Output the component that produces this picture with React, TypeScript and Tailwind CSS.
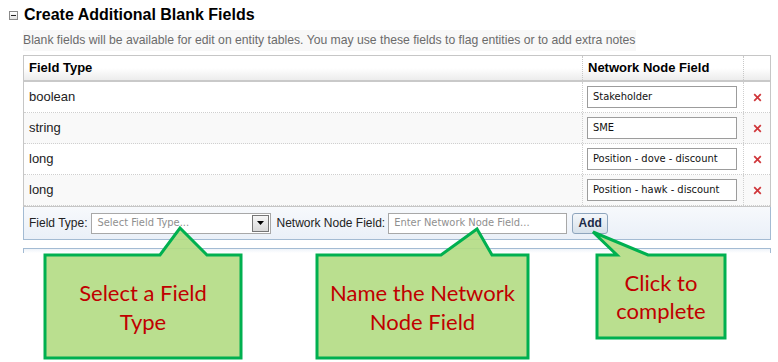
const rows = [
  { type: 'boolean', name: 'Stakeholder' },
  { type: 'string', name: 'SME' },
  { type: 'long', name: 'Position - dove - discount' },
  { type: 'long', name: 'Position - hawk - discount' },
]

const tahoma = "font-['DejaVu_Sans_Condensed','DejaVu_Sans',sans-serif]"

function RemoveIcon() {
  return (
    <svg width="9" height="9" viewBox="0 0 9 9">
      <path d="M1.2 1.2L7.8 7.8M7.8 1.2L1.2 7.8" stroke="#d0363a" strokeWidth="1.7" />
    </svg>
  )
}

function CollapseIcon() {
  return (
    <span className="flex h-[9px] w-[9px] items-center justify-center border border-[#8a8a8a] bg-gradient-to-b from-white to-[#e2e2e2]">
      <span className="h-[1px] w-[5px] bg-[#222]" />
    </span>
  )
}

const callouts = [
  { left: 46, top: 256, w: 194, h: 101, lines: ['Select a Field', 'Type'], lh: 'leading-[29px]' },
  { left: 318, top: 256, w: 209, h: 101, lines: ['Name the Network', 'Node Field'], lh: 'leading-[29px]' },
  { left: 598, top: 256, w: 126, h: 81, lines: ['Click to', 'complete'], lh: 'leading-[28px]' },
]

export default function App() {
  return (
    <div className="relative h-[362px] w-[778px] overflow-hidden bg-white font-['Liberation_Sans',Arial,sans-serif]">
      {/* section title */}
      <div className="flex items-center gap-[6px] pl-[9px] pt-[6px]">
        <CollapseIcon />
        <h2 className="text-[16px] font-bold leading-[18px] text-black">Create Additional Blank Fields</h2>
      </div>

      <div className="ml-[23px] w-[748px]">
        <p className="mt-[6px] inline-block bg-[#f8f8f8] pr-[1px] text-[12.2px] leading-[21px] text-[#6b6b6b]">
          Blank fields will be available for edit on entity tables. You may use these fields to flag entities or to add extra notes
        </p>

        {/* table */}
        <div className="mt-[4px] border border-[#c6c6c6]">
          <div className="flex h-[26px] border-b-2 border-[#c9c9c9] bg-gradient-to-b from-white via-white to-[#ececec] text-[13px] font-bold text-black">
            <div className="flex w-[559px] items-center border-r border-dotted border-[#c8c8c8] pl-[5px]">Field Type</div>
            <div className="flex w-[161px] items-center border-r border-dotted border-[#c8c8c8] pl-[5px]">Network Node Field</div>
            <div className="flex-1" />
          </div>
          {rows.map((row, i) => (
            <div
              key={i}
              className={`flex h-[31px] border-b border-dotted border-[#cfcfcf] text-[13px] text-[#222] ${i % 2 ? 'bg-[#f9f9f9]' : 'bg-white'}`}
            >
              <div className="flex w-[559px] items-center border-r border-dotted border-[#cfcfcf] pl-[5px]">{row.type}</div>
              <div className="flex w-[161px] items-center border-r border-dotted border-[#cfcfcf] pl-[4px]">
                <div className={`flex h-[22px] w-[150px] items-center border border-[#9c9c9c] bg-white pl-[5px] text-[11px] text-[#111] ${tahoma}`}>
                  {row.name}
                </div>
              </div>
              <div className="flex flex-1 items-center justify-center">
                <RemoveIcon />
              </div>
            </div>
          ))}
        </div>

        {/* add toolbar */}
        <div className="flex h-[33px] items-center border-x border-b border-[#a3bbd3] bg-gradient-to-b from-[#f7f9fc] to-[#eaf0f8] pl-[5px] text-[12px] text-[#222]">
          <span>Field Type:</span>
          <div className="ml-[4px] flex h-[21px] w-[180px] items-center border border-[#a8a8a8] bg-white">
            <span className={`flex-1 pl-[5px] text-[11px] text-[#8f8f8f] ${tahoma}`}>Select Field Type...</span>
            <span className="mr-[1px] flex h-[17px] w-[17px] items-center justify-center border border-[#767676] bg-gradient-to-b from-[#f6f6f6] to-[#d9d9d9]">
              <svg width="7" height="4" viewBox="0 0 7 4">
                <path d="M0 0H7L3.5 4Z" fill="#000" />
              </svg>
            </span>
          </div>
          <span className="ml-[5px]">Network Node Field:</span>
          <div className={`ml-[3px] flex h-[21px] w-[179px] items-center border border-[#a8a8a8] bg-white pl-[5px] text-[11px] text-[#8f8f8f] ${tahoma}`}>
            Enter Network Node Field...
          </div>
          <button className="ml-[5px] h-[21px] w-[36px] rounded-[3px] border border-[#8ea5bd] bg-gradient-to-b from-[#f4f7fa] to-[#d6e1eb] text-[12px] font-bold text-[#1c2b47]">
            Add
          </button>
        </div>

        {/* next panel, mostly hidden below the callouts */}
        <div className="mt-[8px] h-[5px] border-x border-t border-[#a3bbd3] bg-gradient-to-b from-[#eef3f9] to-white" />
      </div>

      {/* annotation callouts */}
      <svg className="pointer-events-none absolute inset-0" width="778" height="362">
        <g fill="#b3dc83" fillOpacity="0.9" stroke="#00b050" strokeWidth="3" strokeLinejoin="miter">
          <path d="M45 255H160L180 228L207 255H241V358H45Z" />
          <path d="M317 255H441L477 229L492 255H528V358H317Z" />
          <path d="M597 255H617L593 232L648 255H725V338H597Z" />
        </g>
      </svg>
      {callouts.map((c, i) => (
        <div
          key={i}
          className={`absolute flex flex-col items-center justify-center text-center font-['Lato',sans-serif] text-[22px] text-[#c00000] ${c.lh}`}
          style={{ left: c.left, top: c.top, width: c.w, height: c.h }}
        >
          {c.lines.map((l) => (
            <span key={l}>{l}</span>
          ))}
        </div>
      ))}
    </div>
  )
}
